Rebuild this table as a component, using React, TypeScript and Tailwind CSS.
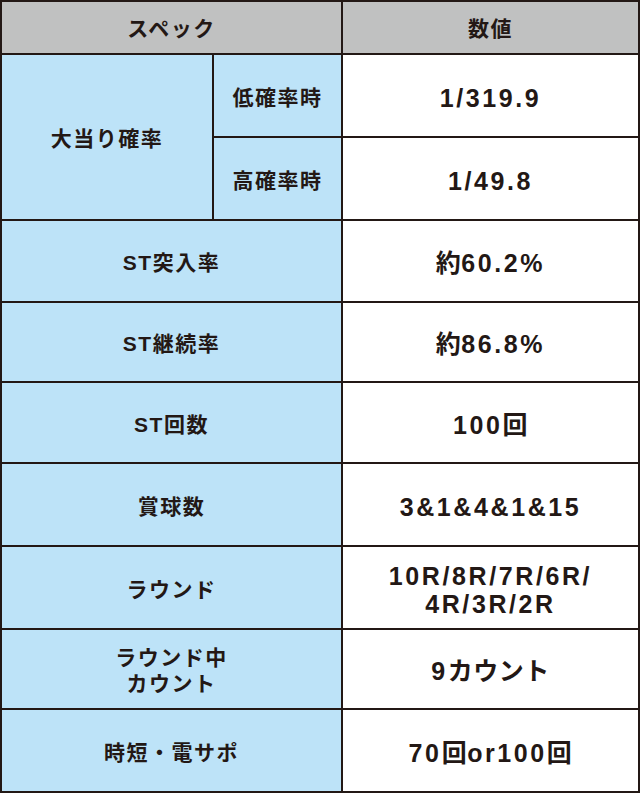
const font = { fontFamily: '"Liberation Sans", "Noto Sans CJK JP", sans-serif' };

type Row = { label: React.ReactNode; value: React.ReactNode };

// latin runs are set a bit wider than the japanese ones
function T({ children }: { children: string }) {
  const parts = children.split(/([\x20-\x7e]+)/).filter(Boolean);
  return (
    <>
      {parts.map((p, i) =>
        /^[\x20-\x7e]+$/.test(p) ? (
          <span key={i} className="tracking-[2.6px]">
            {p}
          </span>
        ) : (
          <span key={i} className="tracking-[0.5px]">
            {p}
          </span>
        )
      )}
    </>
  );
}

const rows: Row[] = [
  { label: "ST突入率", value: <T>約60.2%</T> },
  { label: "ST継続率", value: <T>約86.8%</T> },
  { label: "ST回数", value: <T>100回</T> },
  { label: "賞球数", value: <T>3&1&4&1&15</T> },
  {
    label: "ラウンド",
    value: (
      <>
        <T>10R/8R/7R/6R/</T>
        <br />
        <T>4R/3R/2R</T>
      </>
    ),
  },
  {
    label: (
      <>
        ラウンド中
        <br />
        カウント
      </>
    ),
    value: <T>9カウント</T>,
  },
  { label: "時短・電サポ", value: <T>70回or100回</T> },
];

const label =
  "bg-[#bde3f8] flex items-center justify-center text-center pt-[4px] text-[21px] font-bold tracking-[1.5px] leading-[26px]";
const value =
  "bg-white flex items-center justify-center text-center pt-[4px] text-[25px] font-bold leading-[28px]";

export default function App() {
  return (
    <div className="w-[640px] bg-white">
      <div
        style={font}
        className="grid grid-cols-[210px_127px_295px] grid-rows-[51px_81px_81px_80px_78px_79px_81px_81px_78px_81px] gap-[2px] p-[2px] bg-[#231815] text-[#231815]"
      >
        <div className="col-span-2 bg-[#c0c1c1] flex items-center justify-center pt-[2px] text-[21px] font-bold tracking-[1.5px]">
          スペック
        </div>
        <div className="bg-[#c0c1c1] flex items-center justify-center pt-[2px] text-[21px] font-bold tracking-[1.5px]">
          数値
        </div>

        <div className={`${label} row-span-2`}>大当り確率</div>
        <div className={label}>低確率時</div>
        <div className={value}>
          <T>1/319.9</T>
        </div>
        <div className={label}>高確率時</div>
        <div className={value}>
          <T>1/49.8</T>
        </div>

        {rows.map((r, i) => (
          <div key={i} className="contents">
            <div className={`${label} col-span-2`}>
              <div>{r.label}</div>
            </div>
            <div className={value}>
              <div>{r.value}</div>
            </div>
          </div>
        ))}
      </div>
    </div>
  );
}
